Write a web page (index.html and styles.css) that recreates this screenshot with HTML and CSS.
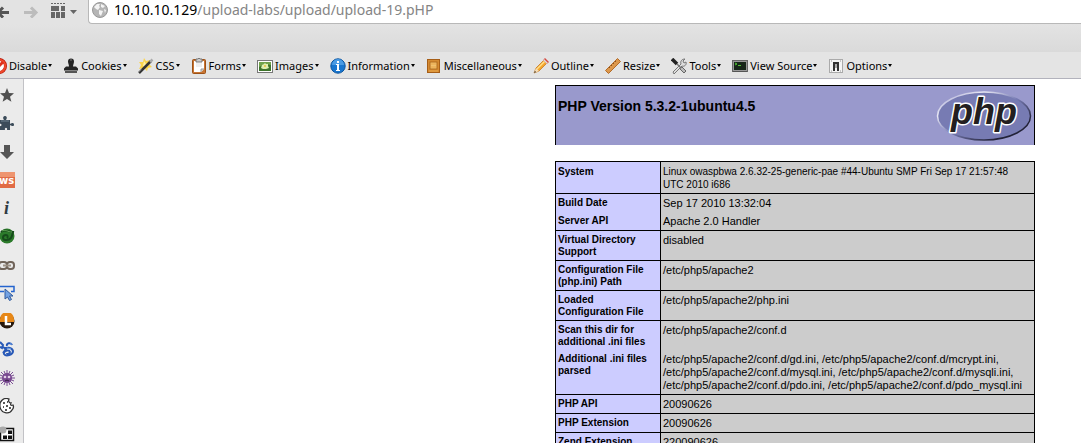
FILE: index.html
```html
<!DOCTYPE html>
<html lang="en">
<head>
<meta charset="utf-8">
<title>phpinfo()</title>
<link rel="stylesheet" href="styles.css">
</head>
<body>
<header class="navbar">
  <button class="nav-btn back" aria-label="Back"><svg width="16" height="16" viewBox="0 0 16 16"><path d="M14 10.500H4M8 5.500 3 10.500l5 5" fill="none" stroke="#555" stroke-width="3"/></svg></button>
  <button class="nav-btn forward" aria-label="Forward"><svg width="16" height="16" viewBox="0 0 16 16"><path d="M1 10.500h11M8 5.500l5 5-5 5" fill="none" stroke="#bcbcbc" stroke-width="3"/></svg></button>
  <button class="nav-btn groups" aria-label="Tab groups"><svg width="27" height="16" viewBox="0 0 27 16"><path d="M0 1.500h14" stroke="#666" stroke-dasharray="2 1"/><path d="M0 4h8v5H0zM10 4h4v5h-4zM0 10h4v6H0zM5 10h4v6H5zM10 10h4v6h-4z" fill="#666"/><path d="M19 8h7l-3.500 4z" fill="#666"/></svg></button>
  <div class="address">
    <svg width="16" height="16" viewBox="0 0 16 16"><circle cx="8" cy="8" r="7.500" fill="#b5b5b5" stroke="#999"/><path d="M2 5l3-3 3 0-1 2 1 1-2 3-2-1zM9 2l4 2-2 2-2-1zM7 8l4 1-2 5-2-2zM12 7l2 1-1 3z" fill="#f4f4f4"/></svg>
    <div class="url"><b>10.10.10.129</b>/upload-labs/upload/upload-19.pHP</div>
  </div>
</header>
<div class="tabstrip"></div>
<nav class="toolbar">
  <button class="tool"><svg width="16" height="16" viewBox="0 0 16 16"><circle cx="8" cy="8" r="6.500" fill="#fff" stroke="#b91508" stroke-width="3"/><circle cx="8" cy="8" r="6.300" fill="none" stroke="#ee4a2c" stroke-width="2"/><path d="M4 12l8-8" stroke="#dd321c" stroke-width="3"/></svg>Disable<i class="caret"></i></button>
  <button class="tool"><svg width="16" height="16" viewBox="0 0 16 16"><path d="M5 3.500a3 3 0 0 1 6 0c0 2-1 3-1 5h3l2 2v2H1v-2l2-2h3c0-2-1-3-1-5z" fill="#242424"/><path d="M2 13h12v2H2z" fill="#555"/><path d="M7 2h2" stroke="#777"/></svg>Cookies<i class="caret"></i></button>
  <button class="tool"><svg width="16" height="16" viewBox="0 0 16 16"><path d="M6 0l2 3 4-1-1 4 3 3-4 1-1 3-3-3-5 1 2-4-2-3 4 0z" fill="#fbd54f"/><path d="M6 3l2 3 3-1-2 4-4-1z" fill="#fff2aa"/><path d="M1 15L13 3" stroke="#333" stroke-width="2.500"/><path d="M12 4l2.500-2.500" stroke="#aaa" stroke-width="2.500"/><path d="M0.500 14L3 11.500" stroke="#aaa"/></svg>CSS<i class="caret"></i></button>
  <button class="tool"><svg width="16" height="16" viewBox="0 0 16 16"><rect x="1.500" y="1.500" width="13" height="14" rx="1" fill="#c87533" stroke="#9c5117"/><path d="M3 3h10v8l-3 3H3z" fill="#fff"/><path d="M10 14v-3h3" fill="#d2d2d2" stroke="#999"/><path d="M5 1h2l1-1 1 1h2v3H5z" fill="#ccc" stroke="#777"/><path d="M5 6h6M5 8h6" stroke="#ddd"/></svg>Forms<i class="caret"></i></button>
  <button class="tool"><svg width="16" height="16" viewBox="0 0 16 16"><rect x=".5" y="2.500" width="15" height="12" fill="#fff" stroke="#777"/><rect x="2" y="4" width="12" height="9" fill="#3d742c"/><path d="M2 4h12v3L8 6 2 9z" fill="#70a24b"/><path d="M5 7l2-1 1-1 1 1 2 0 0 2 1 2-3 1-3 0-2-1z" fill="#ddedaf"/><circle cx="8" cy="8" r="1" fill="#e9bd38"/></svg>Images<i class="caret"></i></button>
  <button class="tool"><svg width="16" height="16" viewBox="0 0 16 16"><circle cx="8" cy="8" r="7.200" fill="#1976cf" stroke="#0c559f"/><path d="M2 7a6 6 0 0 1 12 0z" fill="#4a9be4"/><path d="M7 3h2v2H7zM6 6h3v6h1v1H6v-1h1V7H6z" fill="#fff"/></svg>Information<i class="caret"></i></button>
  <button class="tool"><svg width="16" height="16" viewBox="0 0 16 16"><rect x="1.500" y="1.500" width="12" height="13" fill="#d58b32" stroke="#a65e17"/><rect x="4" y="4" width="7" height="7" fill="#f1c16f" stroke="#b16b1d"/><path d="M3 13h9M5 6h5M5 9h5" stroke="#e9a74a"/></svg>Miscellaneous<i class="caret"></i></button>
  <button class="tool"><svg width="16" height="16" viewBox="0 0 16 16"><path d="M1 15l2-5 9-9 3 3-9 9z" fill="#f4a52b" stroke="#be6d17" stroke-width=".7"/><path d="M4 11l8-8" stroke="#ffe08a" stroke-width="1.500"/><path d="M12 0l4 4-2 2-4-4z" fill="#d5483e"/><path d="M10.500 1.500l4 4" stroke="#ddd" stroke-width="1.500"/><path d="M1 15l2-5 3 3z" fill="#f5ddb5"/><path d="M1 15l1-2 1 1z" fill="#222"/></svg>Outline<i class="caret"></i></button>
  <button class="tool"><svg width="16" height="16" viewBox="0 0 16 16"><path d="M.5 12.500l12-12 3 3-12 12z" fill="#dc974b" stroke="#b36b29"/><path d="M4 9l1 1m1-3 1 1m1-3 1 1m1-3 1 1" stroke="#87501d"/></svg>Resize<i class="caret"></i></button>
  <button class="tool"><svg width="16" height="16" viewBox="0 0 16 16"><path d="M2 14l8-8c-1-3 1-5 4-5l-2 2 1 2 2-1c1 3-2 5-4 4l-8 8z" fill="#ddd" stroke="#777"/><path d="M1 1l5 5" stroke="#222" stroke-width="3.500"/><path d="M6 6l4 4" stroke="#777" stroke-width="1.500"/><path d="M9 10l2-1 4 4-2 2-4-4z" fill="#bbb" stroke="#666"/></svg>Tools<i class="caret"></i></button>
  <button class="tool"><svg width="16" height="16" viewBox="0 0 16 16"><rect x=".5" y="2.500" width="15" height="11" fill="#999" stroke="#666"/><rect x="2" y="4" width="12" height="8" fill="#172619"/><path d="M3 5l2 1-2 1M6 7.500h3" fill="none" stroke="#4ec432"/><path d="M1 13.500h14" stroke="#555"/></svg>View Source<i class="caret"></i></button>
  <button class="tool"><svg width="16" height="16" viewBox="0 0 16 16"><rect x="1.500" y="1.500" width="13" height="13" fill="#f5f5f5" stroke="#aaa"/><path d="M5 4h6v9H9V6H7v7H5z" fill="#333"/><path d="M7 6h2v4H7z" fill="#aaa"/><path d="M3 3h1M12 3h1M3 13h1M12 13h1" stroke="#999"/></svg>Options<i class="caret"></i></button>
</nav>
<div class="main">
  <aside class="sidebar">
    <button aria-label="Bookmarks"><svg viewBox="0 0 16 16"><path d="M8 1l2 5 5 .3-4 3.400 1.400 5L8 12l-4.400 2.700L5 9.700 1 6.300 6 6z" fill="#505050"/></svg></button>
    <button aria-label="Add-ons"><svg viewBox="0 0 16 16"><path d="M1 5h4c-2-3 0-4 1-4s3 1 1 4h4v4c3-2 4-1 4 .5s-1 2.500-4 .5v5H8c1-3-3-3-2 0H1v-4c2 1 2-3 0-2z" fill="#3c4c5a"/><path d="M2 6h8" stroke="#718391"/></svg></button>
    <button aria-label="Downloads"><svg viewBox="0 0 16 16"><path d="M5 1h6v7h4l-7 7-7-7h4z" fill="#555"/></svg></button>
    <button aria-label="WS"><svg viewBox="0 0 16 16"><rect width="16" height="16" fill="#e16b45"/><path d="M0 0h16v5H0z" fill="#ee9570"/><text x="0" y="12" class="ws">ws</text></svg></button>
    <button aria-label="Page info"><svg viewBox="0 0 16 16"><text x="5" y="14" class="info">i</text></svg></button>
    <button aria-label="Green shell"><svg viewBox="0 0 16 16"><circle cx="8" cy="8" r="7.500" fill="#2c7b2b"/><path d="M2 4c4-4 7 0 12 0-1 5-2 8-7 8-4 0-4-5 0-5 2 0 2 2 1 3" fill="none" stroke="#164b1b" stroke-width="2"/><path d="M3 3c3-2 6 1 10 1" fill="none" stroke="#69ad5c"/></svg></button>
    <button aria-label="Links"><svg viewBox="0 0 16 16"><g fill="none" stroke="#70645a" stroke-width="2"><rect x="0" y="5" width="8" height="7" rx="3"/><rect x="8" y="5" width="7" height="7" rx="3"/></g><path d="M4 8.500h8" stroke="#9b9084" stroke-width="2"/></svg></button>
    <button aria-label="Inspect"><svg viewBox="0 0 16 16"><path d="M0 1.500h15v5h-3M0 6.500h5" fill="none" stroke="#2464ce" stroke-width="1.500"/><path d="M6 4v10l2.500-2 2 3.500 2-1-2-3.500h3.500z" fill="#74a3e4" stroke="#315b9d"/></svg></button>
    <button aria-label="Live headers"><svg viewBox="0 0 16 16"><circle cx="8" cy="8" r="7.500" fill="#27180d"/><path d="M1 6a7 7 0 0 1 14 0v3H1z" fill="#e78818"/><path d="M7 3v8h5" fill="none" stroke="#fff" stroke-width="2.500"/></svg></button>
    <button aria-label="Blue spiral"><svg viewBox="0 0 16 16"><path d="M1 1l3 3-1 3-2-1M13 4c-1-3-6-2-5 1M5 8c2-2 8-2 9 2 0 4-7 6-9 3-1-3 5-5 6-2 0 2-3 2-3 1M4 6l3 2-3 4" fill="none" stroke="#2859b7" stroke-width="2"/><path d="M8 7l4 1m-1-5 2 0" stroke="#72a5ea"/></svg></button>
    <button aria-label="Purple bug"><svg viewBox="0 0 16 16"><path d="M8 0v16M0 8h16M2 2l12 12M2 14L14 2M5 1l6 14M1 5l14 6M1 11l14-6M11 1L5 15" stroke="#7b4d94"/><circle cx="8" cy="8" r="5" fill="#794991"/><circle cx="6" cy="7" r="1.300" fill="#e4cfe8"/><circle cx="10" cy="7" r="1.300" fill="#e4cfe8"/><path d="M6 11q2-2 4 0" fill="none" stroke="#301a3e"/></svg></button>
    <button aria-label="Cookie editor"><svg viewBox="0 0 16 16"><path d="M10 1C5-1 0 3 1 9s9 8 12 3c2-2 2-3 1-5-2 1-3 0-2-2-2 0-3-2-2-4z" fill="#fff" stroke="#333" stroke-width="1.300"/><path d="M4 5h2M8 4h1M4 9h1M7 8h2M6 12h2M10 10h2" stroke="#222" stroke-width="1.500"/></svg></button>
    <button aria-label="Grid"><svg viewBox="0 0 16 16"><path d="M1.500 2.500h13v12h-13z" fill="#fff" stroke="#111" stroke-width="1.500"/><path d="M9 4.500h4v3.500H9zM4 9.500h4V13H4zM9 9.500h4V13H9z" fill="#111"/><circle cx="4" cy="4" r="3.500" fill="#aaa"/></svg></button>
  </aside>
  <main class="page">
    <div class="phpinfo">
      <div class="banner">
        <h1>PHP Version 5.3.2-1ubuntu4.5</h1>
        <svg width="96" height="52" viewBox="0 0 96 52" role="img" aria-label="PHP logo">
          <defs><linearGradient id="rim" x1="0" y1="0" x2="1" y2="1"><stop offset="0" stop-color="#9999cc"/><stop offset=".25" stop-color="#e8e8f4"/><stop offset=".5" stop-color="#777bb3"/><stop offset=".8" stop-color="#222238"/></linearGradient></defs>
          <ellipse cx="48" cy="26" rx="46.500" ry="24" fill="#777bb3" stroke="url(#rim)" stroke-width="1.500"/>
          <text x="48" y="34" class="logo-text">php</text>
        </svg>
      </div>
      <table class="info-table">
        <colgroup><col class="key-col"><col></colgroup>
        <tbody>
        <tr class="system"><th scope="row">System</th><td>Linux owaspbwa 2.6.32-25-generic-pae #44-Ubuntu SMP Fri Sep 17 21:57:48<br>UTC 2010 i686</td></tr>
        <tr><th scope="row">Build Date</th><td>Sep 17 2010 13:32:04</td></tr>
        <tr class="joined"><th scope="row">Server API</th><td>Apache 2.0 Handler</td></tr>
        <tr><th scope="row">Virtual Directory Support</th><td>disabled</td></tr>
        <tr><th scope="row">Configuration File (php.ini) Path</th><td>/etc/php5/apache2</td></tr>
        <tr><th scope="row">Loaded Configuration File</th><td>/etc/php5/apache2/php.ini</td></tr>
        <tr><th scope="row">Scan this dir for additional .ini files</th><td>/etc/php5/apache2/conf.d</td></tr>
        <tr class="joined"><th scope="row">Additional .ini files parsed</th><td>/etc/php5/apache2/conf.d/gd.ini, /etc/php5/apache2/conf.d/mcrypt.ini, /etc/php5/apache2/conf.d/mysql.ini, /etc/php5/apache2/conf.d/mysqli.ini, /etc/php5/apache2/conf.d/pdo.ini, /etc/php5/apache2/conf.d/pdo_mysql.ini</td></tr>
        <tr><th scope="row">PHP API</th><td>20090626</td></tr>
        <tr><th scope="row">PHP Extension</th><td>20090626</td></tr>
        <tr><th scope="row">Zend Extension</th><td>220090626</td></tr>
        </tbody>
      </table>
    </div>
  </main>
</div>
</body>
</html>
```

FILE: styles.css
```css
* { box-sizing: border-box; }
body {
  margin: 0;
  height: 100vh;
  display: flex;
  flex-direction: column;
  overflow: hidden;
  background: #fff;
  color: #000;
  font-family: "Noto Sans", "Open Sans", sans-serif;
}
button {
  margin: 0;
  padding: 0;
  border: 0;
  background: none;
  color: inherit;
  font: inherit;
}
svg { display: block; flex: none; }
.navbar {
  display: flex;
  flex: none;
  height: 24px;
  background: #e3e3e3;
}
.nav-btn { height: 20px; flex: none; }
.back { margin-left: -5px; }
.forward { margin-left: 12px; }
.groups { margin: 0 10px 0 12px; }
.address {
  flex: 1;
  display: flex;
  align-items: center;
  gap: 6px;
  padding: 0 0 3px 3px;
  background: #fff;
  border: 1px solid #b8b8b8;
  border-width: 0 0 1px 1px;
  border-radius: 0 0 0 4px;
}
.url {
  color: #858585;
  font-size: 14px;
  line-height: 20px;
  white-space: nowrap;
}
.url b { color: #000; font-weight: 400; }
.tabstrip {
  flex: none;
  height: 28px;
  background: linear-gradient(#e3e3e3, #dadada);
}
.toolbar {
  display: flex;
  flex: none;
  align-items: center;
  gap: 11px;
  height: 27px;
  padding-top: 1px;
  background: #e4e4e4;
  border-bottom: 1px solid #b2b2bc;
  font-size: 11px;
  line-height: 16px;
}
.tool {
  display: flex;
  flex: none;
  align-items: center;
  gap: 2px;
  white-space: nowrap;
}
.tool:first-child { margin-left: -9px; }
.caret {
  margin-left: -1px;
  border: 2px solid transparent;
  border-top: 3px solid #000;
  border-bottom: 0;
}
.main { display: flex; flex: 1; min-height: 0; }
.sidebar {
  display: flex;
  flex: none;
  flex-direction: column;
  justify-content: space-between;
  width: 24px;
  padding: 8px 0 1px;
  background: #ebebeb;
  border-right: 1px solid #c2c2c6;
}
.sidebar button { width: 16px; height: 16px; margin-left: -1px; }
.sidebar svg { width: 16px; height: 16px; }
.ws { font: bold 10px "DejaVu Sans", sans-serif; fill: #fff; }
.info { font: italic bold 18px "Liberation Serif", serif; fill: #2f3b43; }
.page {
  flex: 1;
  display: flex;
  justify-content: flex-end;
  min-width: 0;
  padding: 6px 46px 0 20px;
  overflow: hidden;
  font-family: "Liberation Sans", Arial, sans-serif;
}
.phpinfo { width: 480px; }
.banner {
  display: flex;
  justify-content: space-between;
  align-items: flex-start;
  height: 60px;
  margin-bottom: 16px;
  padding: 4px 2px 0;
  background: #9999cc;
  border: 1px solid #000;
  border-bottom: 0;
}
.banner h1 { margin: 7px 0 0; font-size: 14px; line-height: 18px; }
.logo-text {
  font: italic bold 36px "Liberation Sans", Arial, sans-serif;
  text-anchor: middle;
  fill: #231f20;
  stroke: #fff;
  stroke-width: 3px;
  stroke-linejoin: round;
  paint-order: stroke;
}
.info-table {
  width: 100%;
  table-layout: fixed;
  border-collapse: collapse;
  border: 1px solid #000;
  font-size: 10px;
}
.key-col { width: 105px; }
.info-table th, .info-table td {
  padding: 3px 2px 2px;
  border: 1px solid #000;
  text-align: left;
  vertical-align: top;
}
.info-table th { background: #ccccff; line-height: 12px; }
.info-table td { background: #cccccc; font-size: 11px; line-height: 13px; }
.info-table .system th { padding-top: 4px; }
.info-table .system td { font-size: 10px; }
.info-table .joined th, .info-table .joined td { border-top-style: hidden; }
```
